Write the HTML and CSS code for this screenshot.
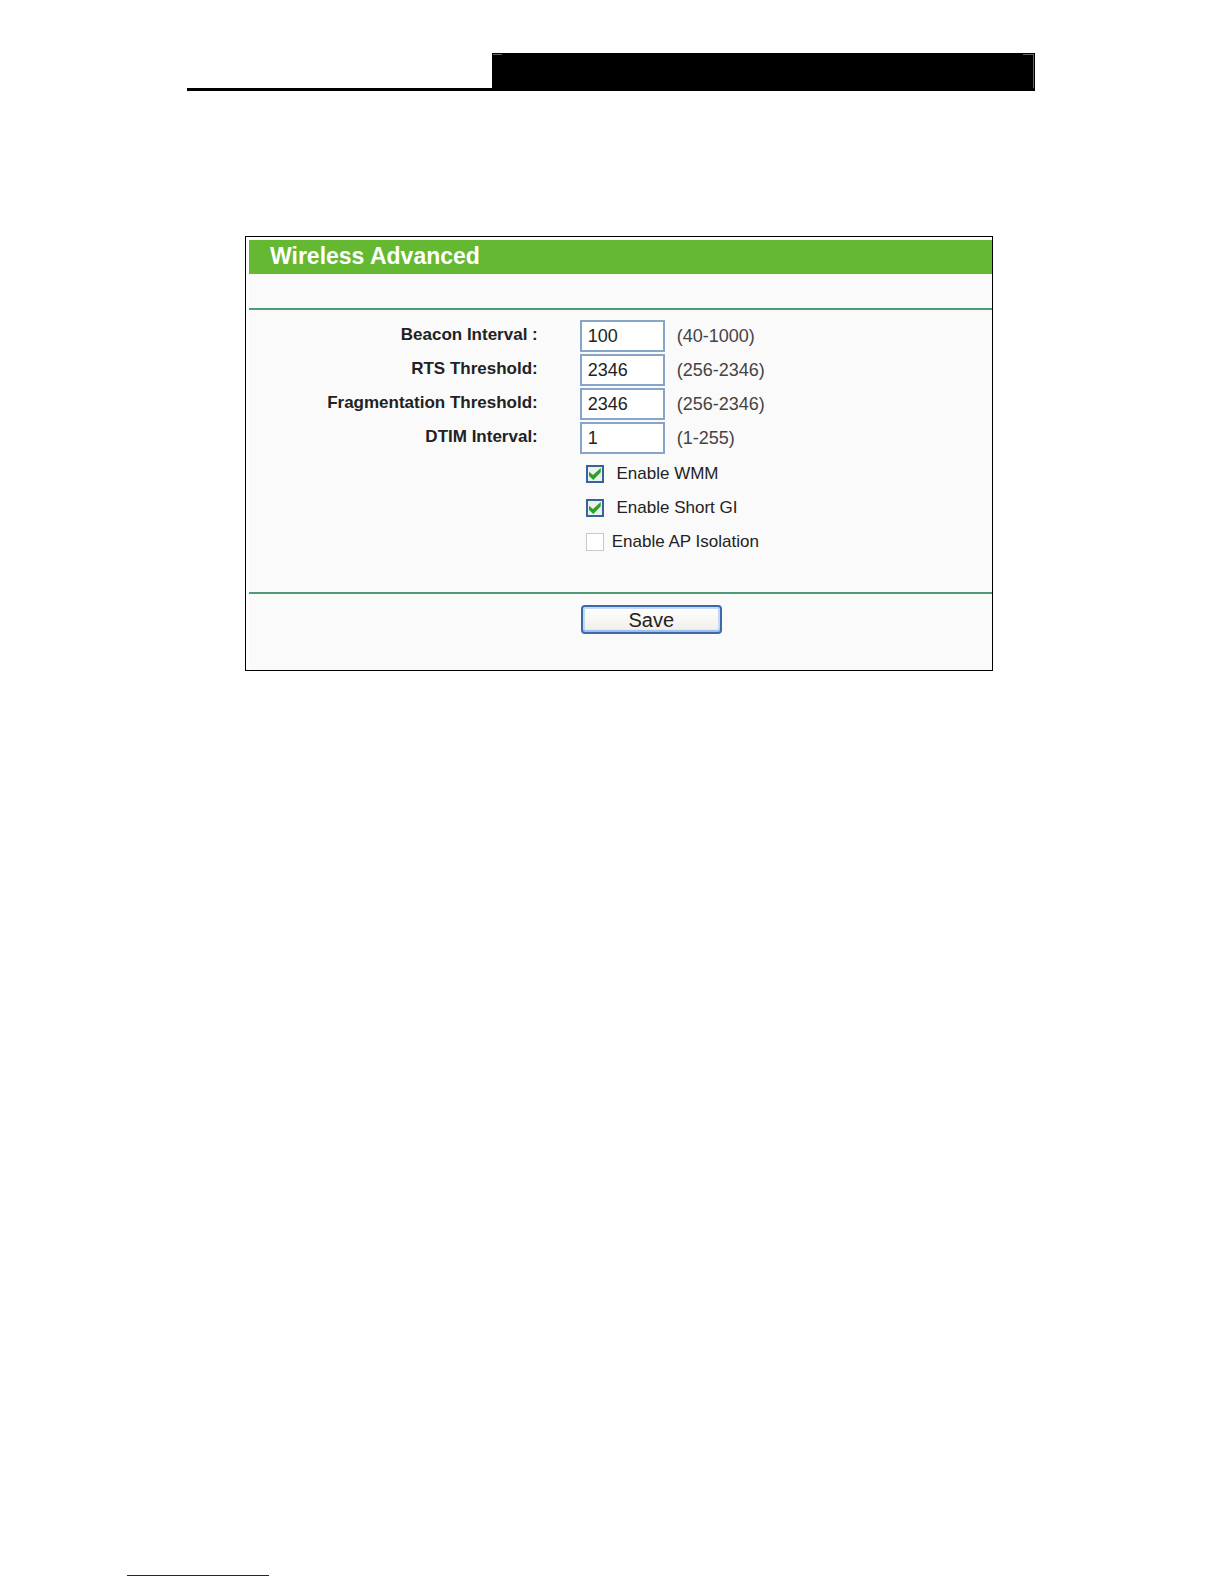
FILE: index.html
```
<!DOCTYPE html>
<html lang="en">
<head>
  <meta charset="UTF-8">
  <meta name="viewport" content="width=device-width, initial-scale=1.0">
  <title>Wireless Advanced</title>
  <link rel="stylesheet" href="styles.css">
</head>
<body>
  <header class="page-header">
    <div class="header-block"></div>
  </header>
  <main class="panel">
    <form class="panel-body">
      <h1>Wireless Advanced</h1>
      <div class="fields">
        <div class="row">
          <label class="name" for="beacon">Beacon Interval :</label>
          <div class="value">
            <input type="text" id="beacon" value="100">
            <span class="hint">(40-1000)</span>
          </div>
        </div>
        <div class="row">
          <label class="name" for="rts">RTS Threshold:</label>
          <div class="value">
            <input type="text" id="rts" value="2346">
            <span class="hint">(256-2346)</span>
          </div>
        </div>
        <div class="row">
          <label class="name" for="fragmentation">Fragmentation Threshold:</label>
          <div class="value">
            <input type="text" id="fragmentation" value="2346">
            <span class="hint">(256-2346)</span>
          </div>
        </div>
        <div class="row">
          <label class="name" for="dtim">DTIM Interval:</label>
          <div class="value">
            <input type="text" id="dtim" value="1">
            <span class="hint">(1-255)</span>
          </div>
        </div>
        <div class="checks">
          <div class="check">
            <input type="checkbox" id="wmm" checked>
            <label for="wmm">&nbsp;Enable WMM</label>
          </div>
          <div class="check">
            <input type="checkbox" id="shortGi" checked>
            <label for="shortGi">&nbsp;Enable Short GI</label>
          </div>
          <div class="check">
            <input type="checkbox" id="isolation">
            <label for="isolation">Enable AP Isolation</label>
          </div>
        </div>
      </div>
      <div class="actions">
        <button type="button" id="saveButton">Save</button>
      </div>
    </form>
  </main>
  <footer class="page-footer">
    <div class="footer-line"></div>
  </footer>
</body>
</html>
```
FILE: styles.css
```
* {
  box-sizing: border-box;
}

body {
  margin: 0;
  display: flex;
  flex-direction: column;
  min-height: 100vh;
  background-color: #fff;
  font-family: "Liberation Sans", Arial, sans-serif;
  font-size: 17px;
  color: #222;
}

.page-header {
  display: flex;
  justify-content: flex-end;
  margin: 53px 189px 0 187px;
  border-bottom: 3px solid #000;
}

.header-block {
  position: relative;
  width: 64%;
  height: 35px;
  background-color: #000;
}

.header-block::before {
  content: "";
  position: absolute;
  top: 1px;
  left: 1px;
  width: 9px;
  height: 1px;
  background-color: #666;
}

.header-block::after {
  content: "";
  position: absolute;
  top: 1px;
  right: 1px;
  bottom: 0;
  width: 10px;
  border-top: 1px solid #666;
  border-right: 1px solid #666;
}

.panel {
  margin: 145px 231px 0 245px;
  padding: 3px 0 0 3px;
  border: 1px solid #000;
}

.panel-body {
  background-color: #fafafa;
}

h1 {
  margin: 0;
  padding: 0 0 2px 21px;
  background-color: #65b832;
  color: #fff;
  font-size: 23px;
  line-height: 32px;
}

.fields {
  margin-top: 34px;
  padding: 9px 0 33px;
  border-top: 2px solid #4f9b78;
  border-bottom: 2px solid #4f9b78;
}

.row {
  display: grid;
  grid-template-columns: 39% 1fr;
  column-gap: 41px;
  align-items: center;
  height: 34px;
}

.name {
  padding: 0 1px 2px 0;
  text-align: right;
  font-weight: bold;
}

.value {
  display: flex;
  align-items: center;
  gap: 12px;
}

input[type="text"] {
  width: 85px;
  height: 32px;
  padding: 0 6px;
  border: 2px solid #86a5c9;
  background-color: #fff;
  font-family: inherit;
  font-size: 18px;
  color: #222;
}

.hint {
  font-size: 18px;
  color: #444;
}

.checks {
  padding: 2px 0 0 calc(39% + 47px);
}

.check {
  display: flex;
  align-items: center;
  gap: 8px;
  height: 34px;
}

input[type="checkbox"] {
  appearance: none;
  display: grid;
  place-items: center;
  width: 18px;
  height: 18px;
  margin: 0;
  border: 1px solid #cbcac0;
  background-color: #fff;
}

input[type="checkbox"]:checked {
  border: 2px solid #34649a;
  background-color: #eef0ec;
}

input[type="checkbox"]:checked::before {
  content: "";
  width: 12px;
  height: 12px;
  background-color: #2ca02c;
  clip-path: polygon(0 30%, 35% 58%, 100% 0, 100% 36%, 38% 100%, 0 65%);
}

.actions {
  padding: 11px 0 36px calc(39% + 42px);
}

#saveButton {
  display: block;
  width: 141px;
  height: 29px;
  padding: 0;
  border: 2px solid #3c6aa8;
  border-radius: 4px;
  background: linear-gradient(#fff, #efeee8);
  box-shadow: inset 0 -2px 1px #9dbcf0, inset 0 0 0 2px #c5dafa;
  font-family: inherit;
  font-size: 20px;
  line-height: 24px;
  color: #222;
}

.page-footer {
  margin: auto 0 0 127px;
  padding-bottom: 8px;
}

.footer-line {
  width: 142px;
  border-top: 1px solid #1a1a80;
}
```
